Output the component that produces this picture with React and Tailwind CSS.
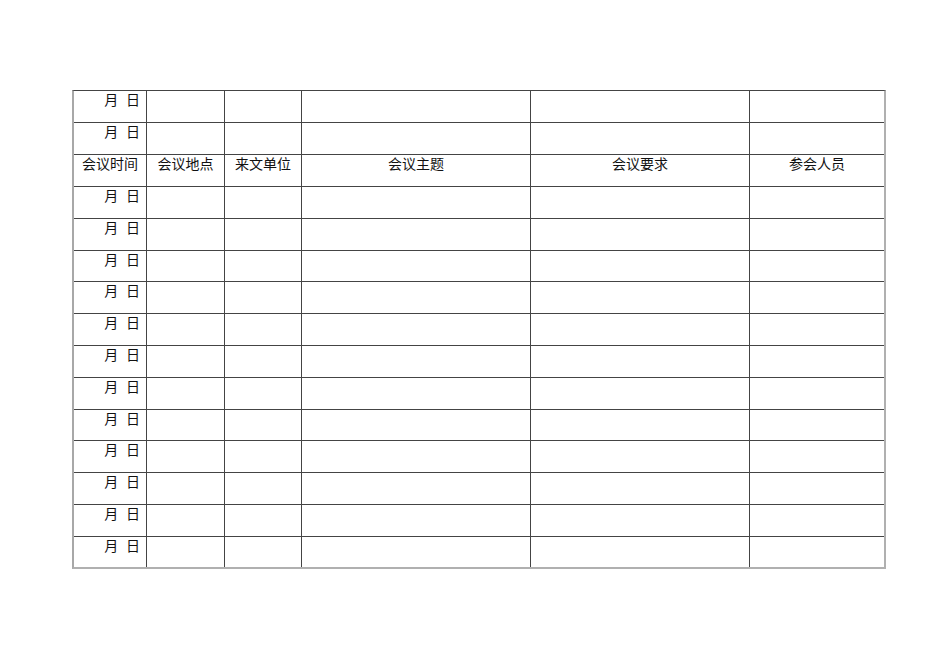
import React from "react"

const cols = ["w-[73px]", "w-[78px]", "w-[77px]", "w-[229px]", "w-[219px]", "w-[134px]"]
const headers = ["会议时间", "会议地点", "来文单位", "会议主题", "会议要求", "参会人员"]

// row heights follow the scanned page: most rows 32px, a few 31px
const rows = [
  { h: "h-[32px]", kind: "date" },
  { h: "h-[32px]", kind: "date" },
  { h: "h-[32px]", kind: "head" },
  { h: "h-[32px]", kind: "date" },
  { h: "h-[32px]", kind: "date" },
  { h: "h-[31px]", kind: "date" },
  { h: "h-[32px]", kind: "date" },
  { h: "h-[32px]", kind: "date" },
  { h: "h-[32px]", kind: "date" },
  { h: "h-[32px]", kind: "date" },
  { h: "h-[31px]", kind: "date" },
  { h: "h-[32px]", kind: "date" },
  { h: "h-[32px]", kind: "date" },
  { h: "h-[32px]", kind: "date" },
  { h: "h-[30px]", kind: "date" },
]

export default function App() {
  return (
    <div
      className="w-[950px] h-[672px] bg-white text-[#111] text-[14px]"
      style={{ fontFamily: '"Liberation Sans", "Noto Sans CJK SC", sans-serif' }}
    >
      <div className="pt-[90px] pl-[72px]">
        <div className="w-[814px] border-t border-t-[#444] border-l-2 border-l-[#a8a8a8] border-r-2 border-r-[#b0b0b0] border-b-2 border-b-[#b0b0b0]">
          {rows.map((row, r) => (
            <div key={r} className={`flex ${row.h}`}>
              {cols.map((w, c) => (
                <div
                  key={c}
                  className={`${w} shrink-0 leading-[18px] ${c < 5 ? "border-r border-r-[#444]" : ""} ${r < 14 ? "border-b border-b-[#444]" : ""} ${
                    row.kind === "head" ? "text-center" : "text-right pr-[6px]"
                  }`}
                >
                  {row.kind === "head" ? headers[c] : c === 0 ? "月\u00a0\u00a0日" : ""}
                </div>
              ))}
            </div>
          ))}
        </div>
      </div>
    </div>
  )
}
